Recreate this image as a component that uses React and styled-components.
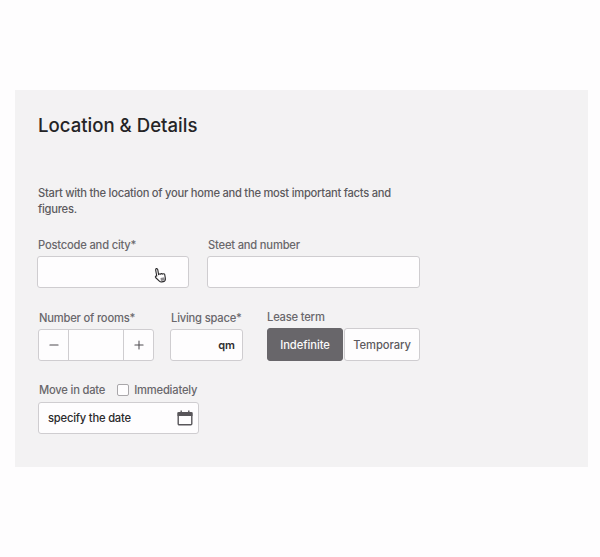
import React from 'react';
import styled, { createGlobalStyle } from 'styled-components';
import { Minus, Plus } from 'lucide-react';

const GlobalStyle = createGlobalStyle`
  html, body {
    margin: 0;
    background: #fefdfe;
    font-family: "Inter", "Liberation Sans", sans-serif;
  }
`;

const Page = styled.div`
  width: 600px;
  height: 557px;
  padding: 90px 12px 0 15px;
  box-sizing: border-box;
`;
const Panel = styled.section`
  height: 377px;
  background: #f3f2f3;
  padding: 24px 0 0 23px;
  box-sizing: border-box;
`;
const Title = styled.h2`
  margin: 0;
  font-size: 18.6px;
  line-height: 23px;
  font-weight: 500;
  color: #252426;
`;
const Intro = styled.p`
  margin: 48px 0 0;
  width: 372px;
  font-size: 11.2px;
  font-weight: 450;
  letter-spacing: -0.26px;
  line-height: 16px;
  color: #5c5a5e;
`;
const Row = styled.div`
  display: flex;
  align-items: flex-start;
  gap: ${(p) => p.$gap || 18}px;
  margin-top: ${(p) => p.$top}px;
`;
const Field = styled.div`
  width: ${(p) => p.$width}px;
  margin-left: ${(p) => p.$left || 0}px;
`;
const Label = styled.label`
  display: block;
  height: 16px;
  margin: 0 0 ${(p) => p.$gap || 4}px ${(p) => p.$indent ?? 1}px;
  font-size: 11.2px;
  font-weight: 450;
  letter-spacing: -0.2px;
  line-height: ${(p) => p.$line || 18}px;
  white-space: nowrap;
  color: #69676b;
`;
const Box = styled.div`
  position: relative;
  display: flex;
  align-items: center;
  justify-content: ${(p) => p.$justify || 'flex-start'};
  height: 32px;
  padding: 0 ${(p) => p.$right || 0}px 0 ${(p) => p.$pad || 0}px;
  box-sizing: border-box;
  background: #fefdfe;
  border: 1px solid #cfcdd0;
  border-radius: 3px;
`;
const Cursor = styled.svg`
  position: absolute;
  left: 116px;
  top: 10px;
  transform: rotate(-10deg);
`;
const StepButton = styled.button`
  display: flex;
  align-items: center;
  justify-content: center;
  width: 29px;
  height: 100%;
  padding: 0;
  border: 0;
  background: none;
  color: #4f4d51;
`;
const StepValue = styled.div`
  flex: 1;
  height: 100%;
  border-left: 1px solid #cfcdd0;
  border-right: 1px solid #cfcdd0;
`;
const Unit = styled.span`
  font-size: 11px;
  font-weight: 600;
  color: #2f2e30;
`;
const Toggle = styled.div`
  display: flex;
  gap: 1px;
`;
const ToggleButton = styled.button`
  width: 76px;
  height: 33px;
  padding: 0;
  box-sizing: border-box;
  border: 1px solid ${(p) => (p.$active ? '#68666a' : '#cfcdd0')};
  border-radius: 3px;
  background: ${(p) => (p.$active ? '#68666a' : '#fefdfe')};
  color: ${(p) => (p.$active ? '#fbfafb' : '#5c5a5e')};
  font-family: inherit;
  font-size: 11.2px;
  font-weight: 450;
  letter-spacing: -0.05px;
`;
const DateLabelRow = styled.div`
  display: flex;
  align-items: center;
  height: 16px;
  margin: 0 0 4px 1px;
  padding-top: 1px;
  font-size: 11.2px;
  font-weight: 450;
  letter-spacing: -0.2px;
  line-height: 16px;
  white-space: nowrap;
  color: #69676b;
`;
const Check = styled.span`
  flex: none;
  width: 10px;
  height: 10px;
  margin: 0 5px 0 12px;
  background: #fefdfe;
  border: 1px solid #a9a7aa;
  border-radius: 2px;
`;
const DateText = styled.span`
  font-size: 11.2px;
  font-weight: 450;
  letter-spacing: -0.2px;
  color: #2a292b;
`;

const HandCursor = () => (
  <Cursor width="13" height="17" viewBox="0 0 13 17" fill="#fefdfe" stroke="#2b2a2c" strokeWidth="1.1" strokeLinejoin="round">
    <path d="M3.5 1c.8 0 1.3.6 1.3 1.3v5c.3-.7 1.7-.7 2 0 .4-.6 1.7-.6 2 .2.5-.5 1.9-.3 2 .7v3.7c0 1.8-1 3.1-2.6 3.1H6.5c-1 0-1.6-.5-2.1-1.2L1.3 9.6c-.6-.9.6-1.9 1.4-1.1V2.3C2.7 1.6 2.9 1 3.5 1z" />
    <path d="M6 11h4v3H6z" fill="#8d8b8f" stroke="none" />
  </Cursor>
);

const CalendarIcon = () => (
  <svg width="16" height="16" viewBox="0 0 16 16" fill="none" stroke="#58565a" strokeWidth="1.4">
    <rect x="1.2" y="2.6" width="13.6" height="12.2" rx="1" />
    <path d="M1.2 3h13.6v2.4H1.2z" fill="#58565a" />
    <path d="M4.2 0.6v2.6M11.8 0.6v2.6" />
  </svg>
);

export default function App() {
  return (
    <>
      <GlobalStyle />
      <Page>
        <Panel>
          <Title>Location &amp; Details</Title>
          <Intro>Start with the location of your home and the most important facts and figures.</Intro>
          <Row $top={19}>
            <Field $width={152} $left={-1}>
              <Label>Postcode and city*</Label>
              <Box>
                <HandCursor />
              </Box>
            </Field>
            <Field $width={213}>
              <Label>Steet and number</Label>
              <Box />
            </Field>
          </Row>
          <Row $top={21} $gap={16}>
            <Field $width={116}>
              <Label>Number of rooms*</Label>
              <Box>
                <StepButton><Minus size={14} strokeWidth={1.8} /></StepButton>
                <StepValue />
                <StepButton><Plus size={14} strokeWidth={1.8} /></StepButton>
              </Box>
            </Field>
            <Field $width={73}>
              <Label>Living space*</Label>
              <Box $justify="flex-end" $right={7}><Unit>qm</Unit></Box>
            </Field>
            <Field $width={153} $left={8}>
              <Label $gap={3} $indent={0} $line={16}>Lease term</Label>
              <Toggle>
                <ToggleButton $active>Indefinite</ToggleButton>
                <ToggleButton>Temporary</ToggleButton>
              </Toggle>
            </Field>
          </Row>
          <Row $top={20}>
            <Field $width={161}>
              <DateLabelRow>
                Move in date
                <Check />
                Immediately
              </DateLabelRow>
              <Box $justify="space-between" $pad={9} $right={5}>
                <DateText>specify the date</DateText>
                <CalendarIcon />
              </Box>
            </Field>
          </Row>
        </Panel>
      </Page>
    </>
  );
}
